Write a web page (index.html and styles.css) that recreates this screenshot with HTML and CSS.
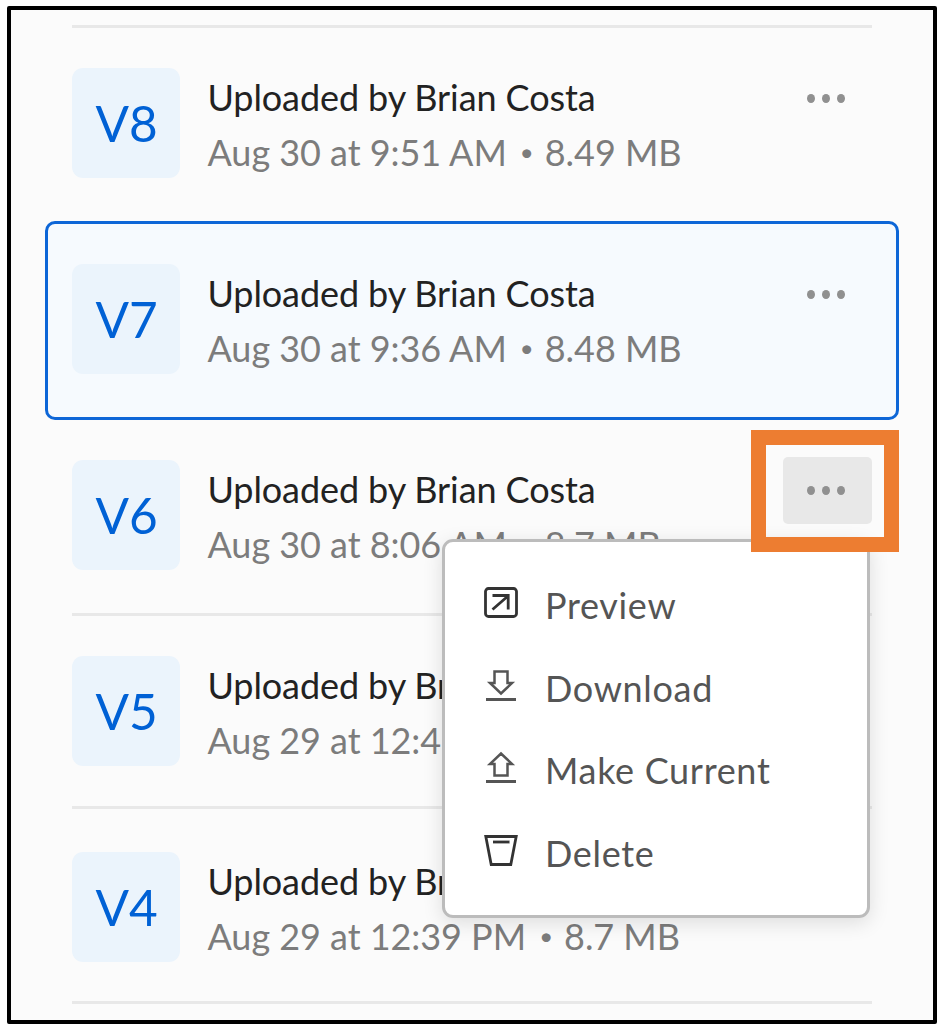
FILE: index.html
```html
<!DOCTYPE html>
<html lang="en">
<head>
<meta charset="utf-8">
<title>Version History</title>
<link rel="stylesheet" href="styles.css">
</head>
<body>
<main class="panel">
  <ul class="versions">
    <li class="version">
      <div class="badge">V8</div>
      <div class="info"><div class="title">Uploaded by Brian Costa</div><div class="meta">Aug 30 at 9:51 AM<span class="sep">•</span>8.49 MB</div></div>
      <button class="more" aria-label="Actions"><i></i><i></i><i></i></button>
    </li>
    <li class="version selected">
      <div class="badge">V7</div>
      <div class="info"><div class="title">Uploaded by Brian Costa</div><div class="meta">Aug 30 at 9:36 AM<span class="sep">•</span>8.48 MB</div></div>
      <button class="more" aria-label="Actions"><i></i><i></i><i></i></button>
    </li>
    <li class="version plain">
      <div class="badge">V6</div>
      <div class="info"><div class="title">Uploaded by Brian Costa</div><div class="meta">Aug 30 at 8:06 AM<span class="sep">•</span>8.7 MB</div></div>
      <button class="more active" aria-label="Actions"><i></i><i></i><i></i></button>
    </li>
    <li class="version short">
      <div class="badge">V5</div>
      <div class="info"><div class="title">Uploaded by Brian Costa</div><div class="meta">Aug 29 at 12:4</div></div>
    </li>
    <li class="version last">
      <div class="badge">V4</div>
      <div class="info"><div class="title">Uploaded by Brian Costa</div><div class="meta">Aug 29 at 12:39 PM<span class="sep">•</span>8.7 MB</div></div>
    </li>
  </ul>
  <nav class="menu">
    <a class="item">
      <svg class="icon" viewBox="0 0 36 36"><rect x="2.500" y="3.500" width="31" height="28" rx="3" stroke-width="2.800"/><path d="M9.500 24.500 25 11M9.500 10.500H25.200V24.500" stroke-width="2.800"/></svg>
      <span>Preview</span>
    </a>
    <a class="item">
      <svg class="icon soft" viewBox="0 0 36 36"><path d="M11.500 3.500H24.500V15H29L18 25.500 7 15H11.500Z" stroke-width="2.500"/><path d="M3 31.500H33" stroke-width="3"/></svg>
      <span>Download</span>
    </a>
    <a class="item">
      <svg class="icon soft" viewBox="0 0 36 36"><path d="M11.500 25.500H24.500V14H29L18 3.500 7 14H11.500Z" stroke-width="2.500"/><path d="M3 31.500H33" stroke-width="3"/></svg>
      <span>Make Current</span>
    </a>
    <a class="item">
      <svg class="icon" viewBox="0 0 36 36"><path d="M2.800 3.500H33.200L27.800 31.500H8.200Z" stroke-width="2.800"/><path d="M10 9H26.500" stroke-width="2.800"/></svg>
      <span>Delete</span>
    </a>
  </nav>
  <div class="highlight"></div>
</main>
</body>
</html>
```
FILE: styles.css
```css
* { box-sizing: border-box; }
body { margin: 0; background: #fff; font-family: Lato, "Liberation Sans", sans-serif; }
.panel {
  position: relative;
  width: 930px;
  height: 1018px;
  margin: 6px 0 0 7px;
  padding: 15px 34px 0;
  border: 4px solid #000;
  border-radius: 2px;
  background: #fbfbfb;
}
.versions { list-style: none; margin: 0; padding: 0; }
.version {
  display: flex;
  align-items: flex-start;
  height: 196px;
  margin: 0 27px;
  padding-top: 40px;
  border-top: 3px solid #e8e8e8;
}
.selected {
  height: 199px;
  margin: 0 0 -3px;
  padding: 40px 24px 0;
  border: 3px solid #0d66d7;
  border-radius: 10px;
  background: #f6fafe;
}
.plain { border-top-color: transparent; }
.short { height: 193px; }
.last { height: 198px; padding-top: 43px; border-bottom: 3px solid #e8e8e8; }
.badge {
  flex: none;
  width: 108px;
  height: 110px;
  padding-left: 1px;
  border-radius: 11px;
  background: #ebf4fc;
  color: #0061d5;
  font-size: 49.500px;
  line-height: 111px;
  text-align: center;
}
.info { flex: none; margin-left: 27.500px; white-space: nowrap; }
.title, .meta { font-size: 36px; line-height: 55px; letter-spacing: -.1px; }
.title { margin-top: 2px; color: #222; }
.meta { color: #7c7c7c; letter-spacing: -.050px; }
.sep {
  display: inline-block;
  width: 38px;
  padding-left: 2px;
  font-size: 24px;
  line-height: 20px;
  text-align: center;
  vertical-align: 5px;
}
.more {
  display: flex;
  align-items: center;
  justify-content: center;
  gap: 7px;
  width: 89px;
  height: 67px;
  margin: -3px 0 0 auto;
  padding: 0 3px 0 0;
  border: 0;
  border-radius: 5px;
  background: none;
}
.more i { width: 8px; height: 9px; border-radius: 50%; background: #909090; }
.more.active { background: #e8e8e8; }
.menu {
  position: absolute;
  left: 431px;
  top: 529px;
  width: 428px;
  height: 379px;
  padding: 22px 38px;
  border: 3px solid #bcbcbc;
  border-radius: 11px;
  background: #fff;
  box-shadow: 0 5px 20px rgba(0, 0, 0, .12);
}
.item { display: flex; align-items: center; gap: 26px; height: 82.500px; color: #555; font-size: 36px; letter-spacing: .680px; white-space: nowrap; }
.icon { width: 36px; height: 36px; margin-top: -4px; fill: none; stroke: #333; }
.soft { stroke: #555; }
.highlight {
  position: absolute;
  left: 740px;
  top: 420px;
  width: 148px;
  height: 122px;
  border: 15px solid #ed7d31;
}
```
